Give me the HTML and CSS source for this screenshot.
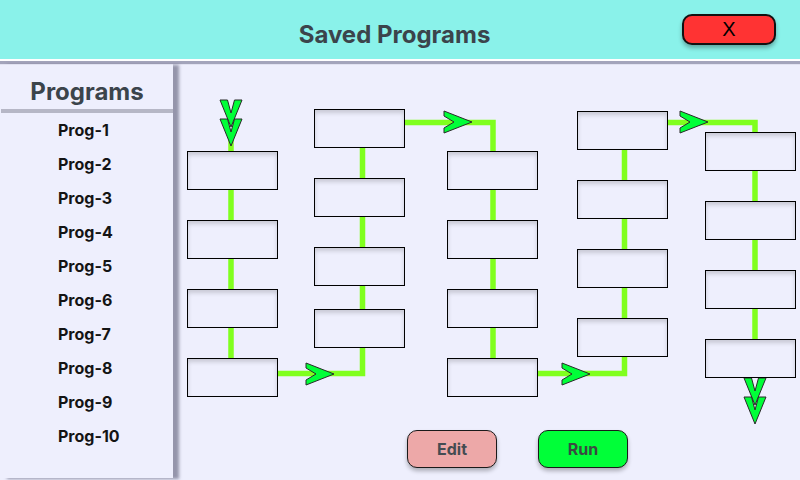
FILE: index.html
```html
<!DOCTYPE html>
<html lang="en">
<head>
<meta charset="utf-8">
<title>Saved Programs</title>
<link rel="stylesheet" href="styles.css">
</head>
<body>
<header class="topbar">
  <div class="topbar-side"></div>
  <h1 class="title">Saved Programs</h1>
  <div class="topbar-actions"><button class="close-btn" type="button">X</button></div>
</header>
<div class="content">
  <aside class="sidebar">
    <h2 class="side-title">Programs</h2>
    <ul class="prog-list">
      <li>Prog-1</li>
      <li>Prog-2</li>
      <li>Prog-3</li>
      <li>Prog-4</li>
      <li>Prog-5</li>
      <li>Prog-6</li>
      <li>Prog-7</li>
      <li>Prog-8</li>
      <li>Prog-9</li>
      <li>Prog-10</li>
    </ul>
  </aside>
  <main class="workspace">
    <div class="diagram">
      <svg class="wires" viewBox="187 61 613 369" width="613" height="369" aria-hidden="true">
        <g class="wire">
          <path d="M231 140 V373.5 H362.5 V130"/>
          <path d="M400 122.5 H493 V380"/>
          <path d="M532 373.5 H624.5 V130"/>
          <path d="M660 122.5 H755 V372"/>
        </g>
        <g class="chev">
          <polygon points="220,100 227.5,100 231,113 234.5,100 242,100 231,127"/>
          <polygon points="220,119 227.5,119 231,132 234.5,119 242,119 231,146"/>
          <polygon points="744,378 751.5,378 755,391 758.5,378 766,378 755,405"/>
          <polygon points="744,397 751.5,397 755,410 758.5,397 766,397 755,424"/>
          <polygon points="306,363 334,374 306,385 306,380 316,374 306,368"/>
          <polygon points="444,111 472,122 444,133 444,128 454,122 444,116"/>
          <polygon points="562,363 590,374 562,385 562,380 572,374 562,368"/>
          <polygon points="680,111 708,122 680,133 680,128 690,122 680,116"/>
        </g>
      </svg>
      <div class="col c1">
        <div class="node"></div><div class="node"></div><div class="node"></div><div class="node"></div>
      </div>
      <div class="col c2">
        <div class="node"></div><div class="node"></div><div class="node"></div><div class="node tight"></div>
      </div>
      <div class="col c3">
        <div class="node"></div><div class="node"></div><div class="node"></div><div class="node"></div>
      </div>
      <div class="col c4">
        <div class="node"></div><div class="node"></div><div class="node"></div><div class="node"></div>
      </div>
      <div class="col c5">
        <div class="node"></div><div class="node"></div><div class="node"></div><div class="node"></div>
      </div>
    </div>
    <div class="controls">
      <button class="btn btn-edit" type="button">Edit</button>
      <button class="btn btn-run" type="button">Run</button>
    </div>
  </main>
</div>
</body>
</html>
```
FILE: styles.css
```css
* { box-sizing: border-box; }

html, body {
  margin: 0;
  padding: 0;
}

body {
  width: 800px;
  height: 480px;
  overflow: hidden;
  background: #eeeffd;
  font-family: Inter, "Noto Sans", sans-serif;
  display: flex;
  flex-direction: column;
}

.topbar {
  position: relative;
  z-index: 2;
  height: 61px;
  flex: none;
  background: #8af2ea;
  border-bottom: 2px solid #ffffff;
  box-shadow: 0 3px 1px rgba(60, 60, 95, 0.42);
  display: grid;
  grid-template-columns: 1fr auto 1fr;
  align-items: start;
  padding-top: 14px;
}

.title {
  margin: 6px 11px 0 0;
  font-size: 24px;
  line-height: 29px;
  font-weight: 700;
  color: #3b444b;
}

.topbar-actions {
  display: flex;
  justify-content: flex-end;
  padding-right: 24px;
}

.close-btn {
  width: 94px;
  height: 31px;
  border: 2px solid #111;
  border-radius: 10px;
  background: #ff3333;
  box-shadow: 0 3px 4px rgba(0, 0, 0, 0.3);
  font-family: "Liberation Sans", Arial, sans-serif;
  font-size: 20px;
  color: #000;
  padding: 0;
  display: flex;
  align-items: center;
  justify-content: center;
}

.content {
  flex: 1;
  display: flex;
  min-height: 0;
}

.sidebar {
  flex: none;
  width: 172px;
  margin: 3px 0 2px 1px;
  background: #eeeffd;
  box-shadow: 6px 1px 3px rgba(60, 60, 90, 0.5);
  position: relative;
  z-index: 1;
}

.side-title {
  margin: 0;
  padding: 13px 0 3px;
  font-size: 24px;
  line-height: 29px;
  font-weight: 700;
  text-align: center;
  color: #3b444b;
  border-bottom: 4px solid #b6b7c6;
}

.prog-list {
  list-style: none;
  margin: 0;
  padding: 0 0 0 57px;
}

.prog-list li {
  font-size: 16px;
  line-height: 34px;
  font-weight: 700;
  color: #141414;
}

.workspace {
  flex: 1;
  display: flex;
  flex-direction: column;
  padding-left: 14px;
}

.diagram {
  position: relative;
  isolation: isolate;
  height: 369px;
  display: grid;
  grid-template-columns: 127px 133px 130px 128px 91px;
  align-items: start;
}

.wires {
  position: absolute;
  left: 0;
  top: 0;
  z-index: -1;
  overflow: visible;
}

.wire path {
  fill: none;
  stroke: #80ff1e;
  stroke-width: 5.5;
  stroke-linejoin: miter;
  stroke-linecap: butt;
}

.chev polygon {
  fill: #00ff38;
  stroke: #2a2a2a;
  stroke-width: 1;
  stroke-linejoin: miter;
}

.col {
  display: flex;
  flex-direction: column;
  gap: 30px;
}

.c1 { padding-top: 90px; }
.c2 { padding-top: 48px; }
.c3 { padding-top: 90px; }
.c4 { padding-top: 50px; }
.c5 { padding-top: 71px; }

.node {
  width: 91px;
  height: 39px;
  border: 1px solid #000;
  background: #eeeffd;
  box-shadow: inset 0 3px 4px rgba(0, 0, 0, 0.16);
}

.node.tight { margin-top: -7px; }

.controls {
  display: flex;
  gap: 41px;
  padding-left: 220px;
}

.btn {
  width: 90px;
  height: 38px;
  border: 1px solid #1a1a1a;
  border-radius: 10px;
  box-shadow: 0 3px 4px rgba(0, 0, 0, 0.28);
  font-family: Inter, "Noto Sans", sans-serif;
  font-size: 16px;
  font-weight: 700;
  padding: 0;
}

.btn-edit {
  background: #eda8a8;
  color: #454c52;
}

.btn-run {
  background: #00ff38;
  color: #3b4a42;
}
```
